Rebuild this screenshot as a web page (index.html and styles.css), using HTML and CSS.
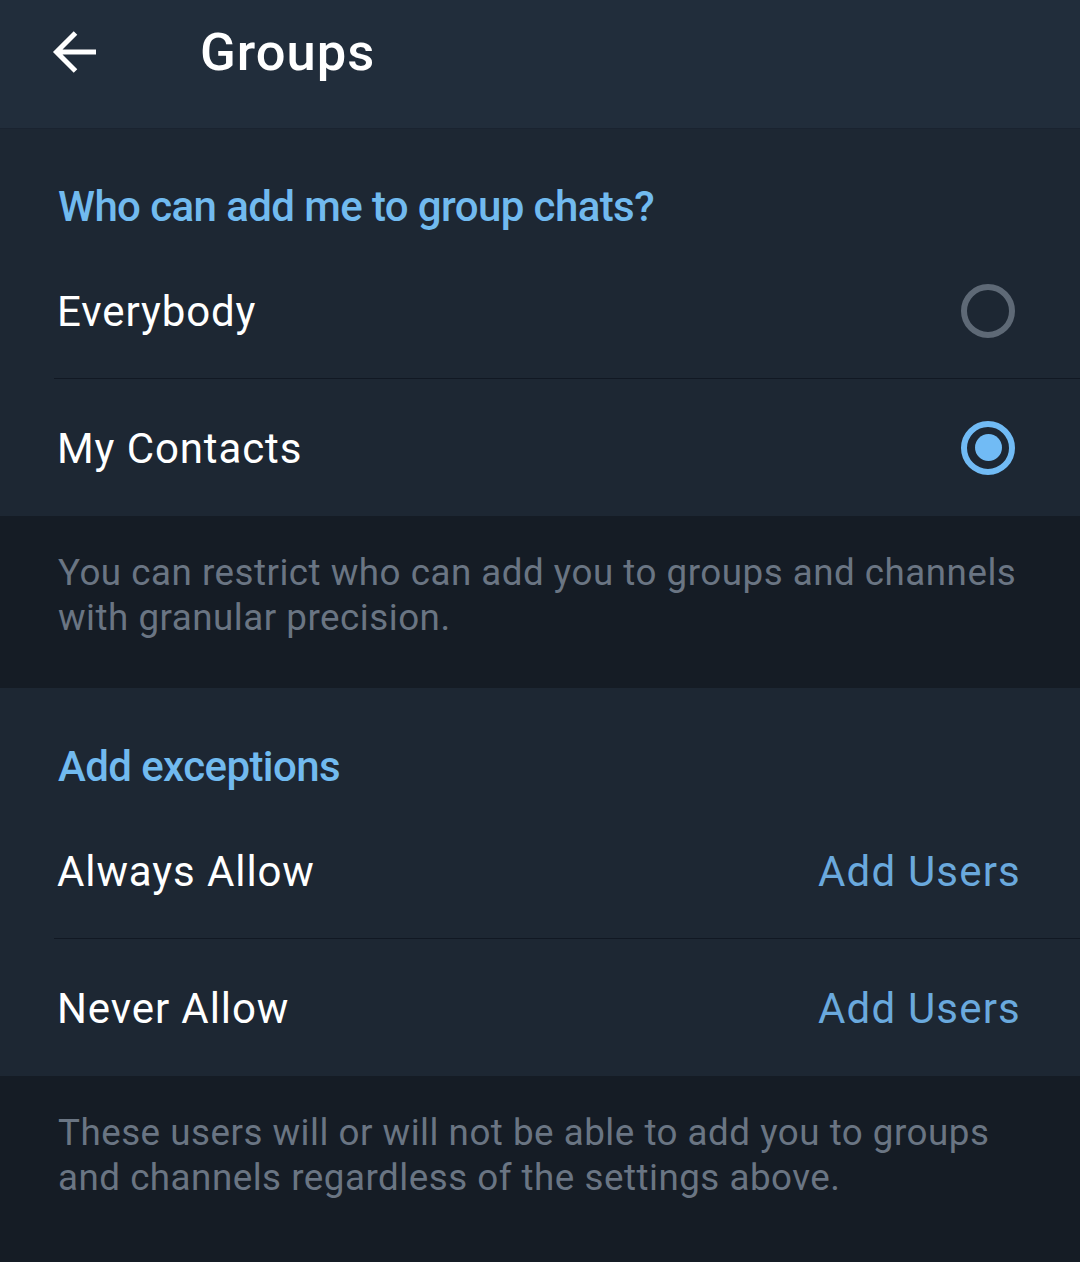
FILE: index.html
```html
<!DOCTYPE html>
<html>
<head>
<meta charset="utf-8">
<link rel="stylesheet" href="styles.css">
</head>
<body>
<div class="screen">
  <header class="appbar">
    <div class="back">
      <svg width="44" height="44" viewBox="0 0 44 44"><path d="M44 22H5M23.5 3L4.5 22l19 19" fill="none" stroke="#fff" stroke-width="5" stroke-linecap="butt" stroke-linejoin="miter"/></svg>
    </div>
    <div class="title">Groups</div>
  </header>

  <section class="card">
    <div class="sec-head">Who can add me to group chats?</div>
    <div class="row divided">
      <span class="label">Everybody</span>
      <span class="radio"></span>
    </div>
    <div class="row">
      <span class="label">My Contacts</span>
      <span class="radio on"></span>
    </div>
  </section>
  <div class="info">You can restrict who can add you to groups and channels with granular precision.</div>

  <section class="card">
    <div class="sec-head">Add exceptions</div>
    <div class="row divided">
      <span class="label">Always Allow</span>
      <span class="value">Add Users</span>
    </div>
    <div class="row">
      <span class="label">Never Allow</span>
      <span class="value">Add Users</span>
    </div>
  </section>
  <div class="info last">These users will or will not be able to add you to groups and channels regardless of the settings above.</div>
</div>
</body>
</html>
```

FILE: styles.css
```css
html, body {
  margin: 0;
  padding: 0;
  background: #151c25;
}
.screen {
  width: 1080px;
  height: 1262px;
  overflow: hidden;
  font-family: Roboto, "Noto Sans", sans-serif;
  background: #151c25;
}
.appbar {
  height: 128px;
  background: #212d3b;
  display: flex;
  align-items: flex-start;
  box-shadow: 0 1px 0 #1a2330;
  position: relative;
  z-index: 1;
}
.back {
  width: 44px;
  height: 44px;
  margin-left: 52px;
  margin-top: 30px;
}
.back svg { display: block; }
.title {
  margin-left: 104px;
  margin-top: 22px;
  line-height: 60px;
  color: #ffffff;
  font-size: 52.5px;
  font-weight: 500;
  letter-spacing: 1px;
}
.card {
  background: #1d2733;
}
.sec-head {
  height: 114px;
  box-sizing: border-box;
  padding: 56px 0 0 58px;
  line-height: 46px;
  color: #71baef;
  font-size: 42px;
  font-weight: 500;
  letter-spacing: -0.6px;
}
.row {
  height: 137px;
  box-sizing: border-box;
  display: flex;
  align-items: center;
  justify-content: space-between;
  padding: 2px 59px 0 57px;
  position: relative;
}
.row.divided::after {
  content: "";
  position: absolute;
  left: 54px;
  right: 0;
  bottom: 0;
  height: 1px;
  background: #111823;
}
.label {
  color: #ffffff;
  font-size: 42px;
  letter-spacing: 0.9px;
}
.value {
  color: #6aa9dd;
  font-size: 42px;
  letter-spacing: 1.2px;
}
.radio {
  width: 54px;
  height: 54px;
  box-sizing: border-box;
  border: 6px solid #5e6976;
  border-radius: 50%;
  margin-right: 6px;
  margin-top: -2px;
  display: flex;
  align-items: center;
  justify-content: center;
}
.radio.on {
  border-color: #71bbf5;
}
.radio.on::after {
  content: "";
  width: 27px;
  height: 27px;
  border-radius: 50%;
  background: #71bbf5;
}
.info {
  height: 172px;
  box-sizing: border-box;
  padding: 34px 58px 0 58px;
  color: #6a7583;
  font-size: 36.75px;
  line-height: 45px;
  letter-spacing: 0.5px;
}
.info.last {
  height: 186px;
}
```
